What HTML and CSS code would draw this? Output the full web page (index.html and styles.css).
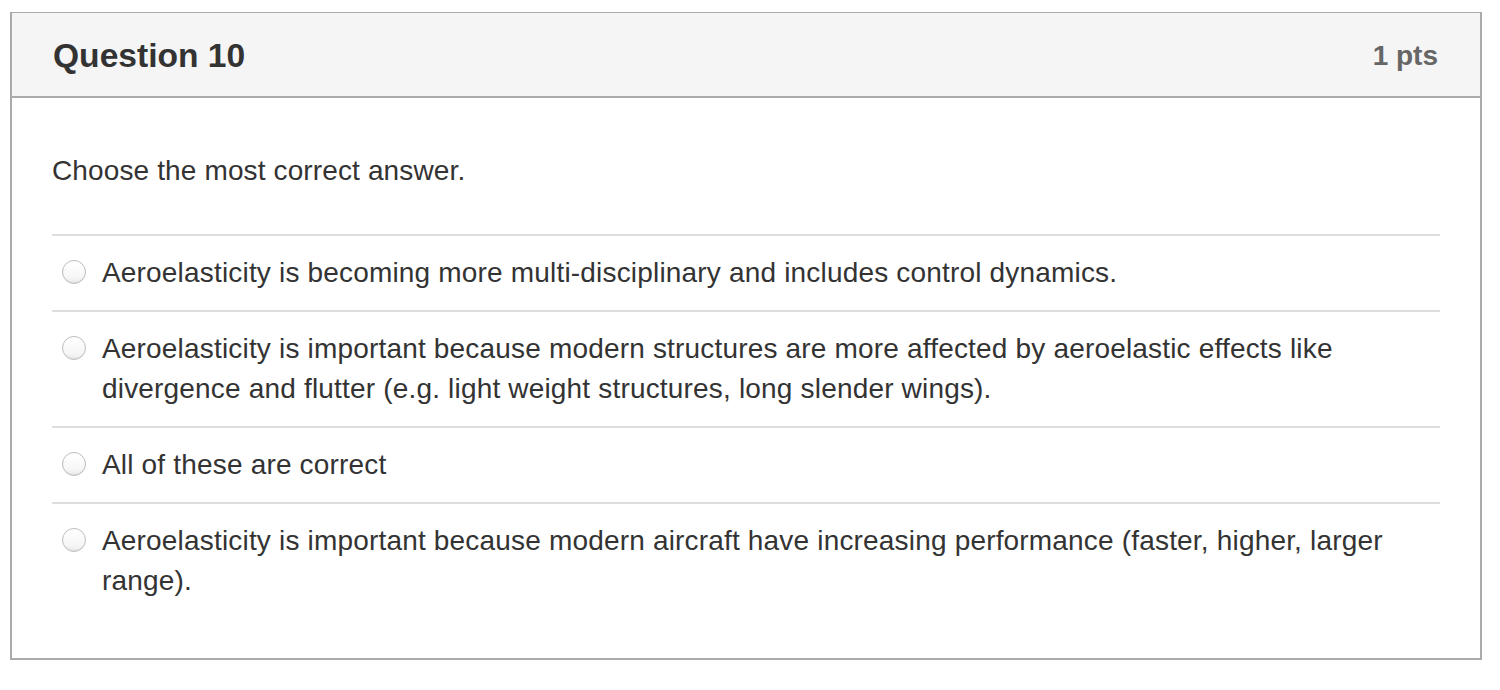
FILE: index.html
```html
<!DOCTYPE html>
<html>
<head>
<meta charset="utf-8">
<link rel="stylesheet" href="styles.css">
</head>
<body>
<div class="question">
  <div class="header">
    <div class="title">Question 10</div>
    <div class="pts">1 pts</div>
  </div>
  <div class="body">
    <div class="text">Choose the most correct answer.</div>
    <div class="answers">
      <label class="answer"><span class="radio"></span><span class="atext">Aeroelasticity is becoming more multi-disciplinary and includes control dynamics.</span></label>
      <label class="answer"><span class="radio"></span><span class="atext">Aeroelasticity is important because modern structures are more affected by aeroelastic effects like divergence and flutter (e.g. light weight structures, long slender wings).</span></label>
      <label class="answer"><span class="radio"></span><span class="atext">All of these are correct</span></label>
      <label class="answer"><span class="radio"></span><span class="atext">Aeroelasticity is important because modern aircraft have increasing performance (faster, higher, larger range).</span></label>
    </div>
  </div>
</div>
</body>
</html>
```
FILE: styles.css
```css
html, body {
  margin: 0;
  padding: 0;
  background: #fff;
}
body {
  padding: 12px 18px 0 10px;
  font-family: "Liberation Sans", Arial, Helvetica, sans-serif;
  color: #333;
}
.question {
  width: 1468px;
  border: 2px solid #aaa;
  border-top-width: 1px;
  background: #fff;
}
.header {
  height: 83px;
  background: #f5f5f5;
  border-bottom: 2px solid #aaa;
  display: flex;
  align-items: center;
  justify-content: space-between;
  padding: 0 42px 0 41px;
}
.title {
  font-size: 33.6px;
  font-weight: bold;
  color: #333;
  padding-top: 2px;
}
.pts {
  font-size: 28px;
  font-weight: bold;
  color: #666;
  padding-top: 2px;
}
.body {
  padding: 53px 40px 40px 40px;
}
.text {
  font-size: 28px;
  line-height: 40px;
  margin-bottom: 43px;
  letter-spacing: 0.13px;
}
.answer {
  display: flex;
  align-items: flex-start;
  border-top: 2px solid #ddd;
  padding: 17px 0;
  font-size: 28px;
  line-height: 40px;
  letter-spacing: 0.18px;
}
.radio {
  flex: none;
  width: 22px;
  height: 22px;
  border: 1px solid #bdbdbd;
  border-radius: 50%;
  background: linear-gradient(#ffffff, #f7f7f7 70%, #ebebeb);
  margin: 7px 16px 0 10px;
  box-shadow: inset 0 -1px 1px rgba(0,0,0,0.05);
}
.atext {
  flex: 1;
}
```
